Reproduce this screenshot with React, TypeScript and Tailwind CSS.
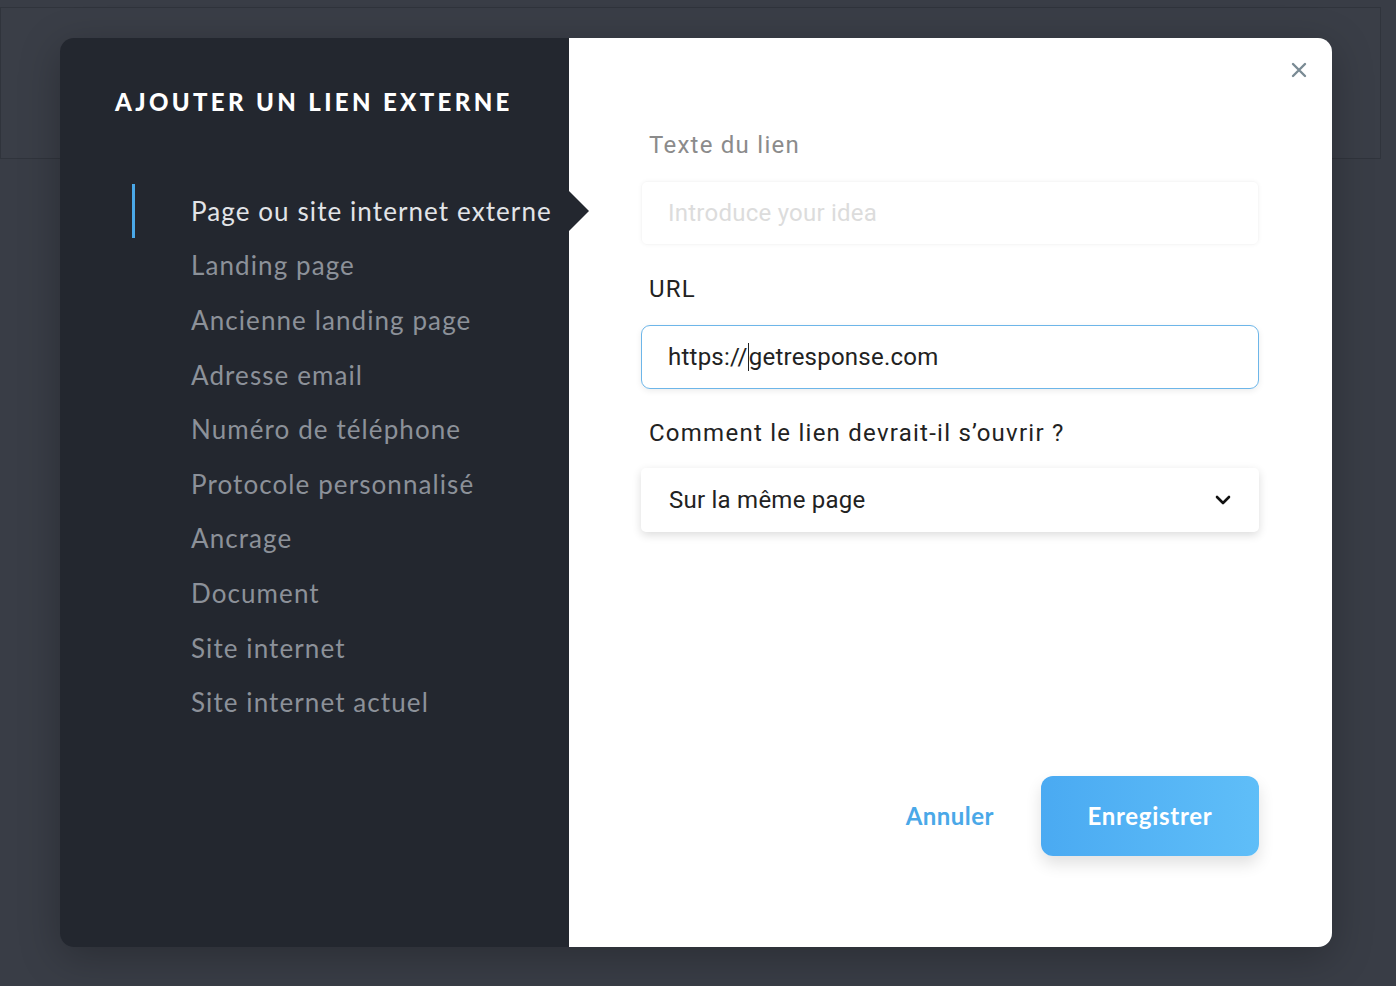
import React from "react";

const items = [
  "Page ou site internet externe",
  "Landing page",
  "Ancienne landing page",
  "Adresse email",
  "Numéro de téléphone",
  "Protocole personnalisé",
  "Ancrage",
  "Document",
  "Site internet",
  "Site internet actuel",
];

export default function App() {
  return (
    <div className="relative w-full h-[986px] bg-[#393d46] overflow-hidden">
      <div className="mt-[7px] h-[152px] w-[1381px] border border-[#30343c] bg-[#3a3e47]" />

      <div className="absolute left-[60px] top-[38px] w-[1272px] h-[909px] flex rounded-[14px] overflow-hidden shadow-[0_10px_40px_rgba(0,0,0,0.25)]">
        {/* Left panel */}
        <div className="relative w-[509px] bg-[#23272f] flex flex-col" style={{ fontFamily: "Lato, 'Open Sans', sans-serif" }}>
          <h1 className="ml-[55px] mt-[49px] text-[24px] leading-[30px] font-black tracking-[0.14em] text-white">
            AJOUTER UN LIEN EXTERNE
          </h1>
          <ul className="mt-[67px] flex flex-col">
            {items.map((it, i) => (
              <li key={it} className="relative h-[54.6px] flex items-center pl-[131px]">
                {i === 0 && <span className="absolute left-[72px] top-0 h-[54px] w-[3px] bg-[#4aa8e8]" />}
                <span className={`text-[26px] tracking-[0.042em] ${i === 0 ? "text-[#e2e4e8]" : "text-[#8c9199]"}`}>
                  {it}
                </span>
              </li>
            ))}
          </ul>
          <div className="absolute right-[-20px] top-[153px] w-0 h-0 border-y-[20px] border-y-transparent border-l-[20px] border-l-[#23272f] z-10" />
        </div>

        {/* Right panel */}
        <div className="relative flex-1 bg-white" style={{ fontFamily: "Roboto, 'Liberation Sans', sans-serif" }}>
          <button className="absolute right-[24px] top-[23px] text-[#7a8b94]">
            <svg width="18" height="18" viewBox="0 0 18 18" fill="none" stroke="currentColor" strokeWidth="2.4" strokeLinecap="round">
              <path d="M3 3 L15 15 M15 3 L3 15" />
            </svg>
          </button>

          <div className="ml-[72px] mr-[73px] pt-[90px] flex flex-col">
            <label className="pl-[8px] text-[24px] leading-[34px] text-[#8b8b8b] tracking-[1.25px]">Texte du lien</label>
            <div className="mt-[19px] h-[64px] rounded-[6px] shadow-[0_0_4px_rgba(0,0,0,0.04)] border border-[#f7f7f7] flex items-center pl-[26px]">
              <span className="text-[24px] text-[#dcdcdc] tracking-[0.01em]">Introduce your idea</span>
            </div>

            <label className="mt-[27px] pl-[8px] text-[24px] leading-[34px] text-[#222] tracking-[1.25px]">URL</label>
            <div className="mt-[19px] h-[64px] rounded-[9px] border border-[#6db6e9] shadow-[0_2px_6px_rgba(0,0,0,0.08)] flex items-center pl-[26px]">
              <span className="text-[24px] text-[#222] tracking-[0.01em]">https://</span>
              <span className="w-[1px] h-[28px] bg-[#222]" />
              <span className="text-[24px] text-[#222] tracking-[0.01em]">getresponse.com</span>
            </div>

            <label className="mt-[27px] pl-[8px] text-[24px] leading-[34px] text-[#222] tracking-[1.25px]">Comment le lien devrait-il s’ouvrir ?</label>
            <div className="mt-[18px] h-[64px] rounded-[5px] shadow-[0_3px_10px_rgba(0,0,0,0.14)] flex items-center justify-between pl-[28px] pr-[28px]">
              <span className="text-[24px] text-[#222] tracking-[0.01em]">Sur la même page</span>
              <svg width="16" height="10" viewBox="0 0 16 10" fill="none" stroke="#111" strokeWidth="2.6" strokeLinecap="round" strokeLinejoin="round">
                <path d="M2 2 L8 8 L14 2" />
              </svg>
            </div>

            <div className="mt-[244px] flex items-center justify-end gap-[47px]" style={{ fontFamily: "Lato, 'Open Sans', sans-serif" }}>
              <button className="text-[24px] font-bold tracking-[0.02em] text-[#4aa8e8]">Annuler</button>
              <button className="w-[218px] h-[80px] rounded-[12px] bg-gradient-to-r from-[#4aaaf2] to-[#5fbef8] text-white text-[24px] font-bold tracking-[0.03em] shadow-[0_8px_16px_rgba(0,0,0,0.12)]">
                Enregistrer
              </button>
            </div>
          </div>
        </div>
      </div>
    </div>
  );
}
